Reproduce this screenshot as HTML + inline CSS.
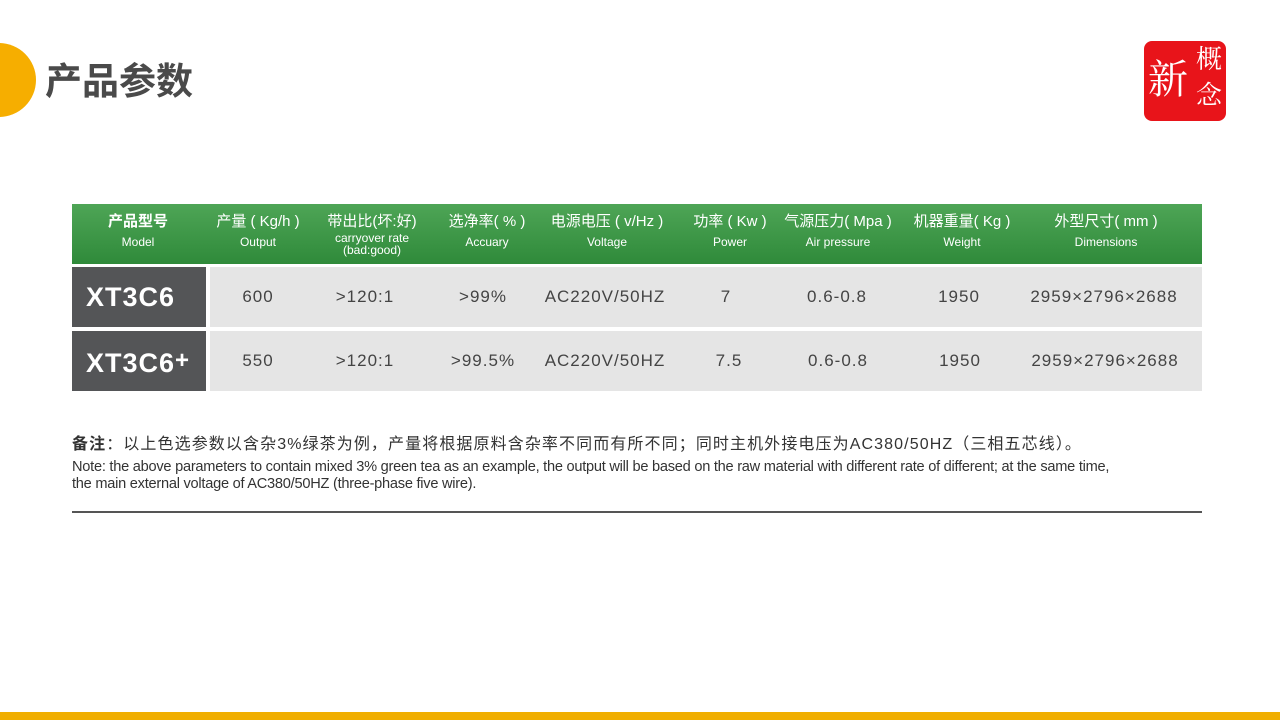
<!DOCTYPE html><html><head><meta charset="utf-8"><style>
*{margin:0;padding:0;box-sizing:border-box}
body{width:1280px;height:720px;position:relative;background:#fff;font-family:"Liberation Sans","Noto Sans CJK SC",sans-serif;overflow:hidden}
.a{position:absolute}
.hd{left:72px;top:204px;width:1130px;height:60px;background:linear-gradient(#4ea556,#2f8a3a)}
.hc{position:absolute;top:8px;text-align:center;color:#fff;font-size:15px;line-height:20px;white-space:nowrap;transform:translateX(-50%)}
.hc small{display:block;font-size:12px;line-height:12px;font-weight:normal}
.row{left:210px;width:992px;height:60px;background:#e5e5e5}
.mc{left:72px;width:134px;height:60px;background:#545557;color:#fff;font-size:27px;line-height:60px;padding-left:14px;letter-spacing:1px;font-weight:bold}
.v{position:absolute;color:#444;font-size:17px;line-height:60px;transform:translateX(-50%);white-space:nowrap;letter-spacing:1px}
</style></head><body>
<div class="a" style="left:-38px;top:43px;width:74px;height:74px;border-radius:50%;background:#f6ae00"></div>
<div class="a" style="left:45px;top:58px;font-size:37px;font-weight:bold;color:#4a4a4a;line-height:48px">产品参数</div>
<div class="a" style="left:1144px;top:41px;width:82px;height:80px;background:#e8141a;border-radius:8px;color:#fff;font-family:'Noto Serif CJK SC',serif">
<span class="a" style="left:4px;top:14px;font-size:40px;line-height:44px">新</span>
<span class="a" style="left:52px;top:2px;font-size:26px;line-height:30px">概</span>
<span class="a" style="left:52px;top:38px;font-size:26px;line-height:30px">念</span></div>
<div class="a hd">
<div class="hc" style="left:66px;font-weight:bold">产品型号<small style="margin-top:4px">Model</small></div>
<div class="hc" style="left:186px">产量 ( Kg/h ) <small style="margin-top:4px">Output</small></div>
<div class="hc" style="left:300px">带出比(坏:好)<small>carryover rate<br>(bad:good)</small></div>
<div class="hc" style="left:415px">选净率( % )<small style="margin-top:4px">Accuary</small></div>
<div class="hc" style="left:535px">电源电压 ( v/Hz )<small style="margin-top:4px">Voltage</small></div>
<div class="hc" style="left:658px">功率 ( Kw )<small style="margin-top:4px">Power</small></div>
<div class="hc" style="left:766px">气源压力( Mpa )<small style="margin-top:4px">Air pressure</small></div>
<div class="hc" style="left:890px">机器重量( Kg )<small style="margin-top:4px">Weight</small></div>
<div class="hc" style="left:1034px">外型尺寸( mm )<small style="margin-top:4px">Dimensions</small></div>
</div>
<div class="a mc" style="top:267px">XT3C6</div>
<div class="a row" style="top:267px">
<span class="v" style="left:48px">600</span><span class="v" style="left:155px">&gt;120:1</span><span class="v" style="left:273px">&gt;99%</span><span class="v" style="left:395px">AC220V/50HZ</span><span class="v" style="left:516px">7</span><span class="v" style="left:627px">0.6-0.8</span><span class="v" style="left:749px">1950</span><span class="v" style="left:894px">2959×2796×2688</span></div>
<div class="a mc" style="top:331px">XT3C6<sup style="font-size:24px;vertical-align:4px">+</sup></div>
<div class="a row" style="top:331px">
<span class="v" style="left:48px">550</span><span class="v" style="left:155px">&gt;120:1</span><span class="v" style="left:273px">&gt;99.5%</span><span class="v" style="left:395px">AC220V/50HZ</span><span class="v" style="left:519px">7.5</span><span class="v" style="left:628px">0.6-0.8</span><span class="v" style="left:750px">1950</span><span class="v" style="left:895px">2959×2796×2688</span></div>
<div class="a" style="left:72px;top:434px;font-size:16px;color:#333;line-height:22px;white-space:nowrap;letter-spacing:1.1px"><b>备注</b>：以上色选参数以含杂3%绿茶为例，产量将根据原料含杂率不同而有所不同；同时主机外接电压为AC380/50HZ（三相五芯线）。</div>
<div class="a" style="left:72px;top:459px;font-size:14.6px;color:#333;line-height:17px;white-space:nowrap;letter-spacing:-0.25px">Note: the above parameters to contain mixed 3% green tea as an example, the output will be based on the raw material with different rate of different; at the same time,<br>the main external voltage of AC380/50HZ (three-phase five wire).</div>
<div class="a" style="left:72px;top:511px;width:1130px;height:2px;background:#555"></div>
<div class="a" style="left:0;top:712px;width:1280px;height:8px;background:#f0ae00"></div>
</body></html>
